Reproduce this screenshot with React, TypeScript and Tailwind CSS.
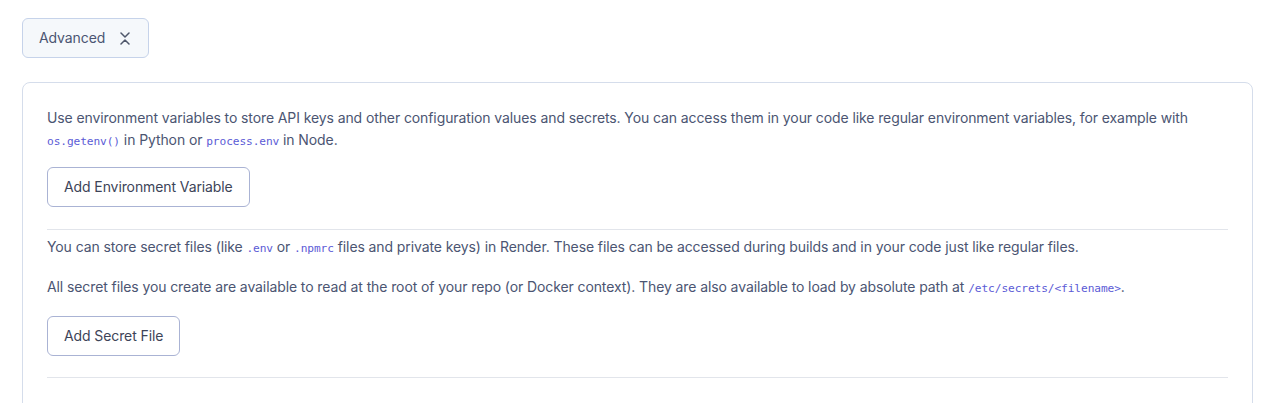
const Code = ({ children }: { children: React.ReactNode }) => (
  <code className="font-['DejaVu_Sans_Mono',monospace] text-[11.2px] leading-none text-[#5b5bd6]">{children}</code>
);

const OutlineButton = ({ label }: { label: string }) => (
  <button className="h-10 px-4 rounded-md border border-[#aab3d4] bg-white text-[14px] leading-none text-[#3d4458]">
    {label}
  </button>
);

export default function App() {
  return (
    <div className="min-h-screen bg-white pl-[22px] pr-[17px] pt-[18px] font-['Inter',sans-serif] text-[14px] leading-[22px] tracking-[-0.1px] text-[#4b5572]">
      <button className="flex items-center gap-[15px] h-10 pl-4 pr-[18px] rounded-md border border-[#c6d3ea] bg-[#f5f8fb] text-[14px] text-[#4b5572]">
        Advanced
        {/* collapse chevrons */}
        <svg width="10" height="13" viewBox="0 0 10 13" fill="none" stroke="#4f576b" strokeWidth="1.5" strokeLinecap="round" strokeLinejoin="round">
          <path d="M1 1l4 4 4-4" />
          <path d="M1 12l4-4 4 4" />
        </svg>
      </button>

      <div className="mt-[24px] rounded-lg border border-[#d5ddeb] px-6 pt-6 pb-8">
        <p>
          Use environment variables to store API keys and other configuration values and secrets. You can access them in
          your code like regular environment variables, for example with <Code>os.getenv()</Code> in Python or{" "}
          <Code>process.env</Code> in Node.
        </p>
        <div className="mt-4 flex">
          <OutlineButton label="Add Environment Variable" />
        </div>

        <hr className="mt-[22px] border-[#e2e5eb]" />

        <p className="mt-[6px]">
          You can store secret files (like <Code>.env</Code> or <Code>.npmrc</Code> files and private keys) in Render.
          These files can be accessed during builds and in your code just like regular files.
        </p>
        <p className="mt-[18px]">
          All secret files you create are available to read at the root of your repo (or Docker context). They are also
          available to load by absolute path at <Code>/etc/secrets/&lt;filename&gt;</Code>.
        </p>
        <div className="mt-[18px] flex">
          <OutlineButton label="Add Secret File" />
        </div>

        <hr className="mt-[21px] border-[#e2e5eb]" />
        <div className="h-16" />
      </div>
    </div>
  );
}
